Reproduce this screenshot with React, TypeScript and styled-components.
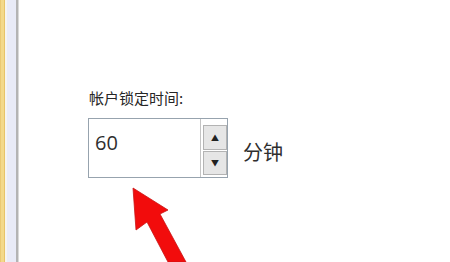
import styled, { createGlobalStyle } from "styled-components";

const GlobalStyle = createGlobalStyle`
  html, body {
    margin: 0;
    padding: 0;
    background: #ffffff;
  }
`;

const Page = styled.div`
  position: relative;
  display: flex;
  width: 450px;
  height: 262px;
  overflow: hidden;
  background: #ffffff;
  font-family: "Noto Sans", "Noto Sans CJK SC", sans-serif;
`;

const EdgeStrip = styled.div`
  width: 19px;
  flex-shrink: 0;
  background: linear-gradient(
    to right,
    #e3b95a 0px,
    #f3d98a 1px,
    #f3d98a 4px,
    #e8c468 4px,
    #e8c468 5px,
    #f6f4ef 5px,
    #f6f4ef 7px,
    #e9ebf7 7px,
    #e9ebf7 16px,
    #b4b4b4 16px,
    #b4b4b4 18px,
    #dadada 18px
  );
`;

const Content = styled.div`
  flex: 1;
  padding: 88px 0 0 69px;
`;

const FieldLabel = styled.div`
  font-family: "Noto Sans CJK SC", sans-serif;
  font-size: 15px;
  line-height: 20px;
  color: #262626;
  margin: 0 0 10px 1px;
`;

const FieldRow = styled.div`
  display: flex;
  align-items: center;
  gap: 15px;
`;

const SpinBox = styled.div`
  display: flex;
  width: 140px;
  height: 60px;
  box-sizing: border-box;
  border: 1px solid #97a3ae;
  background: #ffffff;
`;

const Value = styled.div`
  flex: 1;
  padding: 12px 0 0 6px;
  font-family: "Open Sans", sans-serif;
  font-size: 20px;
  line-height: 24px;
  color: #2e2e2e;
`;

const SpinColumn = styled.div`
  width: 27px;
  display: flex;
  flex-direction: column;
  gap: 1px;
  padding: 6px 0 2px 2px;
  box-sizing: border-box;
  border-left: 1px solid #c4c4c4;
`;

const SpinButton = styled.div`
  flex: 1;
  display: flex;
  align-items: center;
  justify-content: center;
  background: #e6e6e6;
  border: 1px solid #b3b3b3;
  font-size: 8px;
  color: #222222;
`;

const Unit = styled.div`
  font-family: "Noto Sans CJK SC", sans-serif;
  font-size: 20px;
  line-height: 24px;
  color: #2e2e2e;
  margin-top: 8px;
`;

const Pointer = styled.svg`
  position: absolute;
  left: 120px;
  top: 180px;
  width: 80px;
  height: 82px;
`;

const App = () => {
  return (
    <>
      <GlobalStyle />
      <Page>
        <EdgeStrip />
        <Content>
          <FieldLabel>帐户锁定时间:</FieldLabel>
          <FieldRow>
            <SpinBox>
              <Value>60</Value>
              <SpinColumn>
                <SpinButton>▲</SpinButton>
                <SpinButton>▼</SpinButton>
              </SpinColumn>
            </SpinBox>
            <Unit>分钟</Unit>
          </FieldRow>
        </Content>
        <Pointer viewBox="0 0 80 82">
          <polygon
            points="13,8 16,50 27,42 48,82 66,82 40,34 48,30"
            fill="#f20c0c"
            stroke="#c81414"
            strokeWidth="0.8"
            strokeLinejoin="round"
          />
        </Pointer>
      </Page>
    </>
  );
};

export default App;
